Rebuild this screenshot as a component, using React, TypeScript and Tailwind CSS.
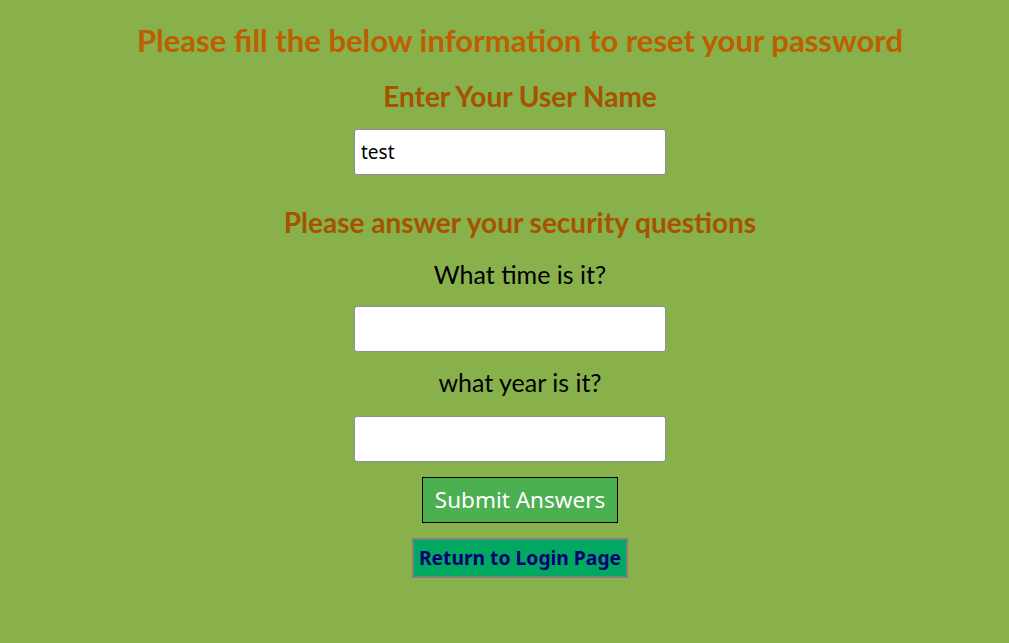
export default function App() {
  return (
    <div className="min-h-[643px] w-full bg-[#88b04b] pl-[31px] font-['Lato','Noto_Sans',sans-serif]">
      <div className="flex flex-col items-center pt-[20px]">
        <h1 className="h-[40px] leading-[40px] text-[31px] font-bold text-[#bd5f00] whitespace-nowrap">
          Please fill the below information to reset your password
        </h1>
        <h2 className="mt-[16px] h-[40px] leading-[40px] text-[28px] font-bold text-[#a65300] whitespace-nowrap">
          Enter Your User Name
        </h2>
        <input
          type="text"
          defaultValue="test"
          className="mt-[13px] mr-[20px] h-[46px] w-[312px] rounded-[3px] border border-[#8f8f9d] bg-white px-[6px] text-[19px] text-black outline-none font-['Noto_Sans',sans-serif]"
        />
        <h2 className="mt-[27px] h-[40px] leading-[40px] text-[28px] font-bold text-[#a65300] whitespace-nowrap">
          Please answer your security questions
        </h2>
        <label className="mt-[16px] h-[32px] leading-[32px] text-[25px] text-black">What time is it?</label>
        <input
          type="text"
          className="mt-[16px] mr-[20px] h-[46px] w-[312px] rounded-[3px] border border-[#8f8f9d] bg-white px-[6px] text-[19px] text-black outline-none font-['Noto_Sans',sans-serif]"
        />
        <label className="mt-[14px] h-[32px] leading-[32px] text-[25px] text-black">what year is it?</label>
        <input
          type="text"
          className="mt-[18px] mr-[20px] h-[46px] w-[312px] rounded-[3px] border border-[#8f8f9d] bg-white px-[6px] text-[19px] text-black outline-none font-['Noto_Sans',sans-serif]"
        />
        <button className="mt-[15px] h-[46px] w-[196px] border border-black bg-[#4caf50] text-[22.5px] text-white font-['Noto_Sans',sans-serif]">
          Submit Answers
        </button>
        <button className="mt-[15px] h-[40px] w-[216px] border-2 border-[#7f7f7f] bg-[#00a862] text-[19.3px] font-bold text-[#000070] font-['Noto_Sans',sans-serif]">
          Return to Login Page
        </button>
      </div>
    </div>
  );
}
